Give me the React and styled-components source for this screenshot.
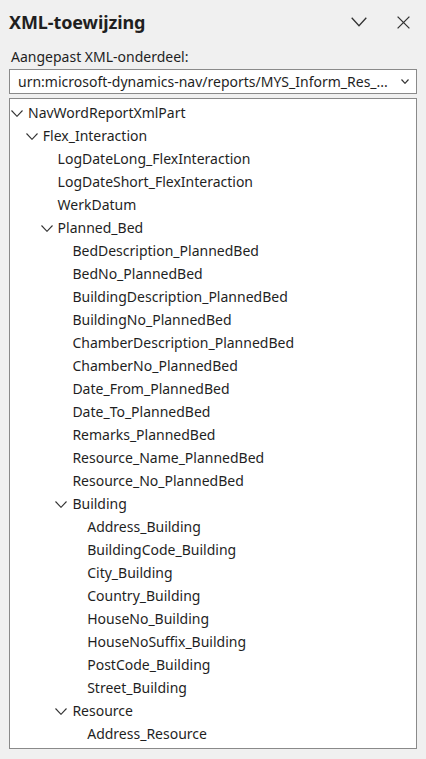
import React from "react";
import styled, { createGlobalStyle } from "styled-components";

const Global = createGlobalStyle`
  html, body { margin: 0; padding: 0; background: #f0f0f0; }
  body { font-family: "Segoe UI", "Noto Sans", "Open Sans", sans-serif; color: #1f1f1f; }
`;

const Pane = styled.div`
  width: 426px;
  height: 759px;
  box-sizing: border-box;
  padding: 0 9px 10px 9px;
  display: flex;
  flex-direction: column;
  background: #f0f0f0;
`;

const Header = styled.div`
  height: 44px;
  display: flex;
  align-items: center;
  justify-content: space-between;
`;

const Title = styled.h1`
  margin: 0;
  font-size: 18px;
  font-weight: 700;
  color: #1f1f1f;
  letter-spacing: -0.1px;
`;

const HeaderButtons = styled.div`
  display: flex;
  align-items: center;
  gap: 22px;
  padding-right: 3px;
`;

const IconButton = styled.button`
  border: none;
  background: transparent;
  padding: 0;
  width: 22px;
  height: 22px;
  display: flex;
  align-items: center;
  justify-content: center;
  color: #333;
`;

const Label = styled.div`
  font-size: 14px;
  height: 25px;
  line-height: 25px;
  padding-left: 2px;
  color: #1f1f1f;
`;

const Select = styled.div`
  height: 25px;
  box-sizing: border-box;
  border: 1px solid #8a8a8a;
  background: #fff;
  display: flex;
  align-items: center;
  justify-content: space-between;
  padding: 0 7px 0 8px;
  font-size: 14px;
  color: #1f1f1f;
  white-space: nowrap;
  overflow: hidden;
`;

const Tree = styled.div`
  margin-top: 4px;
  flex: 1;
  box-sizing: border-box;
  border: 1px solid #8a8a8a;
  background: #fff;
  padding-top: 2px;
  overflow: hidden;
`;

const Row = styled.div`
  height: 23px;
  display: flex;
  align-items: center;
  padding-left: ${(p) => 1 + p.$level * 14.8}px;
  font-size: 14px;
  color: #1f1f1f;
  white-space: nowrap;
`;

const Toggle = styled.span`
  width: 17px;
  flex: none;
  display: flex;
  align-items: center;
  padding-top: 1px;
`;

const Chevron = ({ w = 12, h = 7, sw = 1.1 }) => (
  <svg width={w} height={h} viewBox={`0 0 ${w} ${h}`} fill="none">
    <path d={`M0.5 0.5 L${w / 2} ${h - 0.7} L${w - 0.5} 0.5`} stroke="#333" strokeWidth={sw} />
  </svg>
);

const nodes = [
  [0, "NavWordReportXmlPart", true],
  [1, "Flex_Interaction", true],
  [2, "LogDateLong_FlexInteraction"],
  [2, "LogDateShort_FlexInteraction"],
  [2, "WerkDatum"],
  [2, "Planned_Bed", true],
  [3, "BedDescription_PlannedBed"],
  [3, "BedNo_PlannedBed"],
  [3, "BuildingDescription_PlannedBed"],
  [3, "BuildingNo_PlannedBed"],
  [3, "ChamberDescription_PlannedBed"],
  [3, "ChamberNo_PlannedBed"],
  [3, "Date_From_PlannedBed"],
  [3, "Date_To_PlannedBed"],
  [3, "Remarks_PlannedBed"],
  [3, "Resource_Name_PlannedBed"],
  [3, "Resource_No_PlannedBed"],
  [3, "Building", true],
  [4, "Address_Building"],
  [4, "BuildingCode_Building"],
  [4, "City_Building"],
  [4, "Country_Building"],
  [4, "HouseNo_Building"],
  [4, "HouseNoSuffix_Building"],
  [4, "PostCode_Building"],
  [4, "Street_Building"],
  [3, "Resource", true],
  [4, "Address_Resource"],
];

export default function App() {
  return (
    <>
      <Global />
      <Pane>
        <Header>
          <Title>XML-toewijzing</Title>
          <HeaderButtons>
            <IconButton aria-label="Opties">
              <svg width="16" height="10" viewBox="0 0 16 10" fill="none">
                <path d="M0.7 0.7 L8 8.8 L15.3 0.7" stroke="#333" strokeWidth="1.3" />
              </svg>
            </IconButton>
            <IconButton aria-label="Sluiten">
              <svg width="13" height="13" viewBox="0 0 13 13" fill="none">
                <path d="M0.6 0.6 L12.4 12.4 M12.4 0.6 L0.6 12.4" stroke="#333" strokeWidth="1.3" />
              </svg>
            </IconButton>
          </HeaderButtons>
        </Header>
        <Label>Aangepast XML-onderdeel:</Label>
        <Select>
          <span>urn:microsoft-dynamics-nav/reports/MYS_Inform_Res_...</span>
          <Chevron w={8} h={5} sw={1.2} />
        </Select>
        <Tree>
          {nodes.map(([lvl, name, branch], i) => (
            <Row key={i} $level={lvl}>
              <Toggle>{branch && <Chevron />}</Toggle>
              {name}
            </Row>
          ))}
        </Tree>
      </Pane>
    </>
  );
}
